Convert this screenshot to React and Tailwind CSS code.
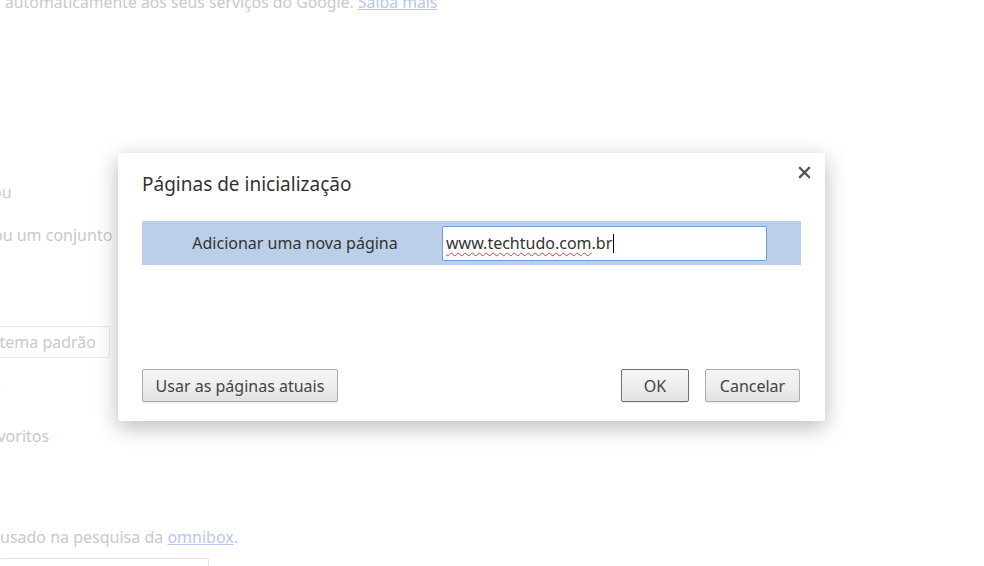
import React from "react";

const font = { fontFamily: '"Noto Sans", "Open Sans", Arial, sans-serif' };

function Btn({ children, className = "", focused = false }) {
  return (
    <button
      className={`h-[33px] rounded-[2px] border text-[16px] text-[#444] bg-gradient-to-b from-[#f6f6f6] via-[#eeeeee] to-[#e2e2e2] shadow-[0_1px_0_rgba(0,0,0,0.08)] whitespace-nowrap ${
        focused ? "border-[#6f6f6f]" : "border-[#ababab]"
      } ${className}`}
    >
      {children}
    </button>
  );
}

export default function App() {
  return (
    <div
      className="relative w-[984px] h-[566px] overflow-hidden bg-white text-[#c9c9c9] text-[16px]"
      style={font}
    >
      {/* faded settings page behind the dialog */}
      <div className="flex flex-col">
        <div className="h-[20px] -mt-[8px] pl-[5px] whitespace-nowrap leading-[20px] text-[15.8px]">
          automaticamente aos seus serviços do Google.{" "}
          <span className="text-[#b9c8ee] underline">Saiba mais</span>
        </div>
        <div className="mt-[169px] h-[22px] leading-[22px] -ml-[8px] whitespace-nowrap">ou</div>
        <div className="mt-[21px] h-[22px] leading-[22px] -ml-[7px] whitespace-nowrap">ou um conjunto</div>
        <div className="mt-[80px] h-[32px] w-[150px] -ml-[40px] rounded-[2px] border border-[#ececec] pr-[13px] text-right leading-[30px] whitespace-nowrap">
          sistema padrão
        </div>
        <div className="mt-[16px] h-[22px] leading-[22px] -ml-[7px] text-[#a7bce8]">s</div>
        <div className="mt-[29px] h-[22px] leading-[22px] -ml-[17px] whitespace-nowrap">favoritos</div>
        <div className="mt-[79px] h-[22px] leading-[22px] ml-0 whitespace-nowrap">
          usado na pesquisa da{" "}
          <span className="text-[#b9c8ee] underline">omnibox</span>.
        </div>
        <div className="mt-[10px] h-[30px] w-[210px] -ml-[1px] rounded-[2px] border border-[#e2e2e2]"></div>
      </div>

      {/* dialog overlay */}
      <div className="absolute left-[118px] top-[153px] w-[707px] h-[268px] rounded-[3px] bg-white shadow-[0_6px_22px_rgba(0,0,0,0.28)] flex flex-col px-[24px] pt-[19px] pb-[19px]">
        <div className="flex items-start justify-between">
          <div className="text-[19px] leading-[24px] text-[#333] whitespace-nowrap">Páginas de inicialização</div>
          <svg className="mt-[-6px] mr-[-10px]" width="13" height="13" viewBox="0 0 13 13">
            <path d="M2 2 L11 11 M11 2 L2 11" stroke="#555" strokeWidth="2.3" strokeLinecap="square" />
          </svg>
        </div>

        <div className="mt-[25px] h-[44px] bg-[#bccfe9] flex items-center pr-[34px]">
          <div className="flex-1 text-center text-[16px] text-[#333] pl-[6px] whitespace-nowrap">
            Adicionar uma nova página
          </div>
          <div className="w-[325px] h-[35px] rounded-[2px] bg-white border border-[#6f9de4] flex items-center pl-[3px] text-[16px] text-[#333] whitespace-nowrap">
            <span className="underline decoration-wavy decoration-[#e03a3a] decoration-1 underline-offset-[3px]">
              www.techtudo.com
            </span>
            <span>.br</span>
            <span className="ml-[1px] inline-block w-[1px] h-[19px] bg-black"></span>
          </div>
        </div>

        <div className="flex-1"></div>

        <div className="flex items-end">
          <Btn className="w-[196px]">Usar as páginas atuais</Btn>
          <div className="flex-1"></div>
          <Btn className="w-[68px]" focused>OK</Btn>
          <Btn className="w-[95px] ml-[16px] mr-[1px]">Cancelar</Btn>
        </div>
      </div>
    </div>
  );
}
